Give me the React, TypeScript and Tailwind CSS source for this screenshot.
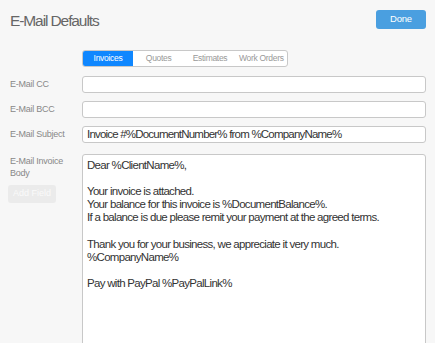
const tabs = ["Invoices", "Quotes", "Estimates", "Work Orders"];

const body = [
  "Dear %ClientName%,",
  "",
  "Your invoice is attached.",
  "Your balance for this invoice is %DocumentBalance%.",
  "If a balance is due please remit your payment at the agreed terms.",
  "",
  "Thank you for your business, we appreciate it very much.",
  "%CompanyName%",
  "",
  "Pay with PayPal %PayPalLink%",
];

function Field({ label, value }: { label: string; value?: string }) {
  return (
    <div className="flex items-center">
      <div className="w-[72px] shrink-0 text-[9px] tracking-[-0.25px] text-[#888]">{label}</div>
      <div className="flex-1 min-w-0 h-[17px] bg-white border border-[#c8c8c8] rounded-[3px] px-[4px] flex items-center text-[11.5px] tracking-[-0.8px] text-[#333] whitespace-nowrap overflow-hidden">
        {value}
      </div>
    </div>
  );
}

export default function App() {
  return (
    <div
      className="w-[435px] h-[343px] bg-[#f7f7f7] overflow-hidden pl-[10px] pr-[9px] pt-[10px]"
      style={{ fontFamily: '"Liberation Sans", Arial, sans-serif' }}
    >
      <div className="flex justify-between items-start">
        <h1 className="text-[15.5px] tracking-[-1.1px] text-[#666] leading-[21px]">E-Mail Defaults</h1>
        <button className="w-[50px] h-[19px] bg-[#4a9fe0] rounded-[3px] text-white text-[9.5px] tracking-[-0.2px]">
          Done
        </button>
      </div>

      <div className="ml-[72px] mt-[19px] w-[206px] h-[17px] flex border border-[#c8c8c8] rounded-[3px] overflow-hidden bg-white">
        {tabs.map((t, i) => (
          <div
            key={t}
            className={
              i === 0
                ? "w-[50px] flex items-center justify-center bg-[#0f87ff] text-white text-[8.5px] tracking-[-0.3px]"
                : "flex-1 flex items-center justify-center text-[#999] text-[8.5px] tracking-[-0.3px]"
            }
          >
            {t}
          </div>
        ))}
      </div>

      <div className="mt-[9px] flex flex-col gap-[8px]">
        <Field label="E-Mail CC" />
        <Field label="E-Mail BCC" />
        <Field label="E-Mail Subject" value="Invoice #%DocumentNumber% from %CompanyName%" />
      </div>

      <div className="flex mt-[11px]">
        <div className="w-[72px] shrink-0">
          <div className="text-[9px] tracking-[-0.25px] leading-[12px] text-[#888] w-[60px] pt-[1px]">E-Mail Invoice Body</div>
          <button className="mt-[6px] -ml-[2px] w-[48px] h-[18px] bg-[#ebebeb] rounded-[3px] text-[9px] text-[#fafafa]">
            Add Field
          </button>
        </div>
        <div className="flex-1 min-w-0 h-[200px] bg-white border border-[#c8c8c8] rounded-[3px] px-[4px] pt-[4px] text-[11.5px] tracking-[-0.7px] text-[#333]">
          {body.map((l, i) => (
            <div key={i} className="h-[13.1px] leading-[13px] whitespace-nowrap">
              {l}
            </div>
          ))}
        </div>
      </div>
    </div>
  );
}
